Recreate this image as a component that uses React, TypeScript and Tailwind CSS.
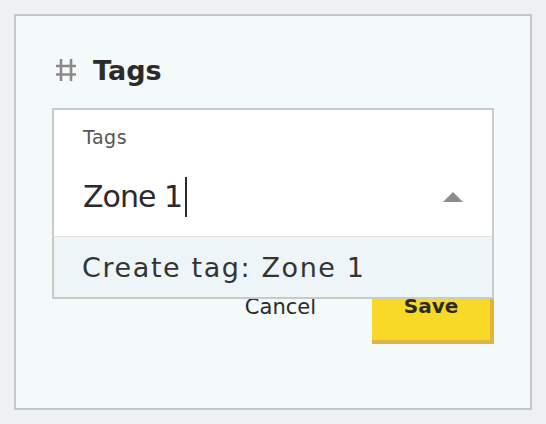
import React from "react";

export default function App() {
  return (
    <div className="w-[546px] h-[424px] bg-[#eef1f2] p-[14px]" style={{ fontFamily: "'DejaVu Sans', 'Open Sans', sans-serif" }}>
      <div className="w-[518px] h-[396px] border-2 border-[#c6c6c6] bg-[#f4f9f9] px-[36px] pt-[36px]">
        <div className="flex items-center h-[36px] pl-[3px]">
          <svg width="22" height="24" viewBox="0 0 22 24" className="shrink-0">
            <path d="M6 1 V23 M16 1 V23 M1 8 H21 M1 16.5 H21" stroke="#8a8a8a" strokeWidth="2.6" fill="none" />
          </svg>
          <span className="ml-[16px] text-[27px] font-bold text-[#2b2b2b] leading-none">Tags</span>
        </div>
        <div className="relative mt-[20px]">
          <div className="border-2 border-[#cacaca] bg-white h-[130px] pl-[29px] pr-[29px] pt-[15px]">
            <div className="text-[19px] text-[#555] leading-[24px] tracking-[0.5px]">Tags</div>
            <div className="flex items-center justify-between mt-[26px] h-[44px]">
              <div className="flex items-center">
                <span className="text-[30px] text-[#2b2b2b] leading-none tracking-[-1px]">Zone 1</span>
                <span className="ml-[3px] w-[2px] h-[40px] bg-[#2b2b2b]" />
              </div>
              <svg width="20" height="10" viewBox="0 0 20 10">
                <path d="M10 0 L20 10 L0 10 Z" fill="#8c8c8c" />
              </svg>
            </div>
          </div>
          <div className="absolute left-0 right-0 top-[128px] z-10 h-[63px] bg-[#eef5f8] border-2 border-t border-[#cacaca] border-t-[#e0e0e0] pl-[28px] flex items-center">
            <span className="text-[27px] text-[#333] tracking-[1.6px] leading-none">Create tag: Zone 1</span>
          </div>
          <div className="flex justify-end items-center mt-[32px]">
            <button className="text-[21px] text-[#2b2b2b] mr-[56px] leading-none">Cancel</button>
            <button className="w-[122px] h-[74px] bg-[#f8d928] border-r-4 border-b-4 border-[#e3b43a] text-[20px] font-bold text-[#2b2b2b] leading-none pt-[2px]">Save</button>
          </div>
        </div>
      </div>
    </div>
  );
}
